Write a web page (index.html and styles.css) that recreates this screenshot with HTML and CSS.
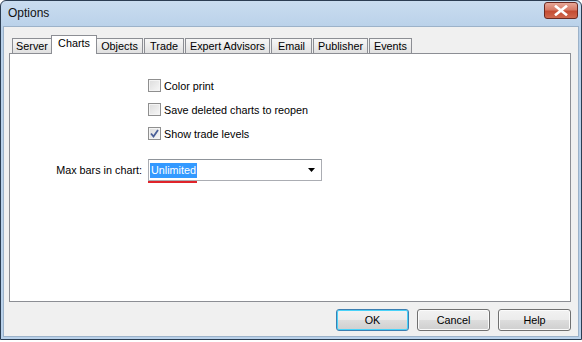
FILE: index.html
```html
<!DOCTYPE html>
<html>
<head>
<meta charset="utf-8">
<link rel="stylesheet" href="styles.css">
</head>
<body>
<div class="window">
  <div class="titlebar">
    <span class="title">Options</span>
    <div class="close">
      <svg width="14" height="11" viewBox="0 0 14 11"><path d="M2 1.5 L12 9.5 M12 1.5 L2 9.5" stroke="#fff" stroke-width="2.6" stroke-linecap="square" fill="none"/></svg>
    </div>
  </div>
  <div class="client">
    <div class="tabs">
      <div class="tab t-server">Server</div>
      <div class="tab active t-charts">Charts</div>
      <div class="tab t-objects">Objects</div>
      <div class="tab t-trade">Trade</div>
      <div class="tab t-expert">Expert Advisors</div>
      <div class="tab t-email">Email</div>
      <div class="tab t-publisher">Publisher</div>
      <div class="tab t-events">Events</div>
    </div>
    <div class="panel">
      <div class="checks">
        <label class="check"><span class="box"></span><span>Color print</span></label>
        <label class="check"><span class="box"></span><span>Save deleted charts to reopen</span></label>
        <label class="check"><span class="box checked"><svg width="9" height="9" viewBox="0 0 9 9"><path d="M1 4.5 L3.5 7.5 L8 1" stroke="#4a5f97" stroke-width="1.8" fill="none"/></svg></span><span>Show trade levels</span></label>
      </div>
      <div class="field">
        <span class="label">Max bars in chart:</span>
        <div class="combo">
          <span class="sel">Unlimited</span>
          <svg class="arrow" width="7" height="4" viewBox="0 0 7 4"><path d="M0 0 H7 L3.5 4 Z" fill="#000"/></svg>
          <span class="underline"></span>
        </div>
      </div>
    </div>
    <div class="buttons">
      <div class="btn default">OK</div>
      <div class="btn">Cancel</div>
      <div class="btn help">Help</div>
    </div>
  </div>
</div>
</body>
</html>
```
FILE: styles.css
```css
html, body {
  margin: 0;
  padding: 0;
  background: #ffffff;
}
body {
  width: 582px;
  height: 342px;
  overflow: hidden;
  font-family: "Liberation Sans", Arial, sans-serif;
  font-size: 10.8px;
  color: #000;
}
.window {
  box-sizing: border-box;
  width: 582px;
  height: 340px;
  border: 1px solid #2b3d52;
  border-radius: 6px 6px 0 0;
  background: linear-gradient(#c9dcef, #b8d0e9 30px, #b9d1ea);
  padding: 0 2px 2px 2px;
  display: flex;
  flex-direction: column;
}
.titlebar {
  height: 25px;
  display: flex;
  align-items: center;
  justify-content: space-between;
  padding-left: 5px;
  padding-right: 1px;
}
.title {
  font-size: 12px;
  color: #111;
  margin-top: -1px;
}
.close {
  width: 34px;
  height: 17px;
  box-sizing: border-box;
  border: 1px solid #6b2a22;
  border-radius: 3px;
  background: linear-gradient(#e7a797, #d67a66 45%, #c44c33 55%, #d0694f);
  display: flex;
  align-items: center;
  justify-content: center;
  margin-top: -6px;
}
.client {
  flex: 1;
  background: #f0f0f0;
  border: 1px solid #9cb2c9;
  display: flex;
  flex-direction: column;
  padding: 8px 7px 0 5px;
}
.tabs {
  display: flex;
  align-items: flex-end;
  height: 18px;
  padding-left: 3px;
  position: relative;
  z-index: 1;
}
.tab {
  box-sizing: border-box;
  height: 15px;
  border: 1px solid #8c8e94;
  border-bottom: none;
  background: linear-gradient(#f7f7f7, #ececec 50%, #e0e0e0);
  text-align: center;
  line-height: 14px;
  margin-right: 1px;
  white-space: nowrap;
}
.tab.active {
  background: #fff;
  margin-left: -2px;
  margin-right: -1px;
  margin-bottom: -1px;
  height: 19px;
  line-height: 15px;
}
.t-server { width: 40px; }
.t-charts { width: 46px; }
.t-objects { width: 47px; }
.t-trade { width: 40px; }
.t-expert { width: 85px; }
.t-email { width: 41px; }
.t-publisher { width: 55px; }
.t-events { width: 43px; }
.panel {
  box-sizing: border-box;
  width: 562px;
  height: 249px;
  border: 1px solid #8c8e94;
  background: #fff;
  padding: 25px 0 0 0;
}
.checks {
  display: flex;
  flex-direction: column;
  gap: 11px;
  padding-left: 138px;
}
.check {
  display: flex;
  align-items: center;
  height: 13px;
  gap: 3px;
}
.box {
  box-sizing: border-box;
  width: 13px;
  height: 13px;
  border: 1px solid #8f8f8f;
  background: linear-gradient(135deg, #dcdcdc, #f7f7f7);
  box-shadow: inset 0 0 0 1px #f4f4f4;
  display: flex;
  align-items: center;
  justify-content: center;
}
.field {
  display: flex;
  align-items: center;
  margin-top: 19px;
}
.label {
  width: 132px;
  text-align: right;
  margin-right: 6px;
}
.combo {
  position: relative;
  box-sizing: border-box;
  width: 174px;
  height: 22px;
  border: 1px solid #abadb3;
  border-top-color: #8f949a;
  background: #fff;
  display: flex;
  align-items: center;
  padding-left: 1px;
}
.sel {
  background: #3399ff;
  color: #fff;
  padding: 1px 1px;
  line-height: 13px;
}
.arrow {
  position: absolute;
  right: 6px;
  top: 8px;
}
.underline {
  position: absolute;
  left: -1px;
  top: 21px;
  width: 49px;
  height: 2px;
  background: #e0232a;
}
.buttons {
  display: flex;
  justify-content: flex-end;
  gap: 8px;
  padding-top: 7px;
  padding-right: 0;
}
.btn {
  box-sizing: border-box;
  width: 73px;
  height: 22px;
  border: 1px solid #707070;
  border-radius: 3px;
  background: linear-gradient(#f2f2f2, #ebebeb 50%, #dddddd 50%, #cfcfcf);
  display: flex;
  align-items: center;
  justify-content: center;
  box-shadow: inset 0 0 0 1px #fbfbfb;
}
.btn.default {
  border-color: #3c7fb1;
  box-shadow: inset 0 0 0 1px #48d2f9;
}
```
